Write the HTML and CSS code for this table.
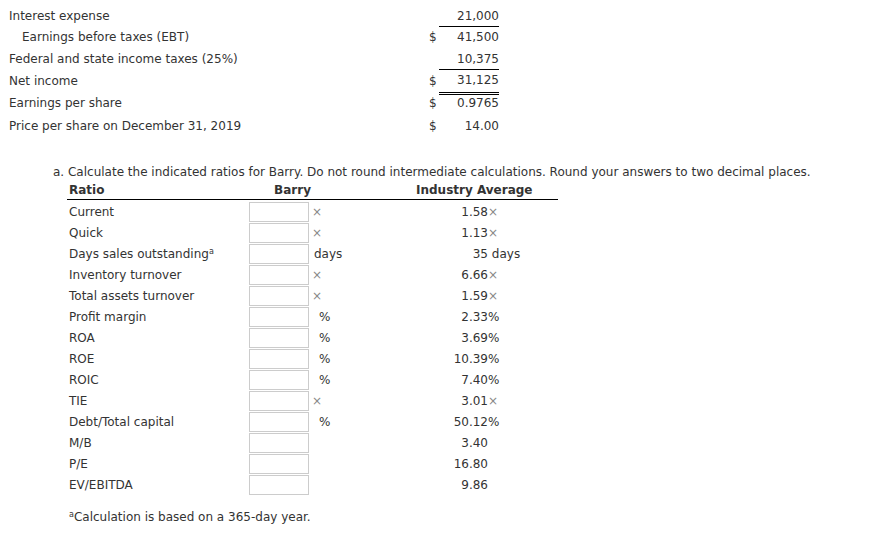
FILE: index.html
```html
<!DOCTYPE html>
<html>
<head>
<meta charset="utf-8">
<link rel="stylesheet" href="styles.css">
</head>
<body>
<div class="page">
  <div class="income">
    <div class="irow r1"><span class="lbl">Interest expense</span><span class="cur"></span><span class="num under">21,000</span></div>
    <div class="irow r2"><span class="lbl indent">Earnings before taxes (EBT)</span><span class="cur">$</span><span class="num">41,500</span></div>
    <div class="irow r3"><span class="lbl">Federal and state income taxes (25%)</span><span class="cur"></span><span class="num under">10,375</span></div>
    <div class="irow r4"><span class="lbl">Net income</span><span class="cur">$</span><span class="num dbl">31,125</span></div>
    <div class="irow r5"><span class="lbl">Earnings per share</span><span class="cur">$</span><span class="num">0.9765</span></div>
    <div class="irow r6"><span class="lbl">Price per share on December 31, 2019</span><span class="cur">$</span><span class="num">14.00</span></div>
  </div>

  <p class="instr">a. Calculate the indicated ratios for Barry. Do not round intermediate calculations. Round your answers to two decimal places.</p>

  <div class="ratios">
    <div class="hrow">
      <span class="h-ratio">Ratio</span>
      <span class="h-barry">Barry</span>
      <span class="h-ind">Industry Average</span>
    </div>
    <div class="rrow first"><span class="rl">Current</span><span class="box"></span><span class="unit x">×</span><span class="ind"><span class="iv">1.58</span><span class="iu x">×</span></span></div>
    <div class="rrow"><span class="rl">Quick</span><span class="box"></span><span class="unit x">×</span><span class="ind"><span class="iv">1.13</span><span class="iu x">×</span></span></div>
    <div class="rrow"><span class="rl">Days sales outstanding<sup>a</sup></span><span class="box"></span><span class="unit">days</span><span class="ind"><span class="iv">35</span><span class="iu">&nbsp;days</span></span></div>
    <div class="rrow"><span class="rl">Inventory turnover</span><span class="box"></span><span class="unit x">×</span><span class="ind"><span class="iv">6.66</span><span class="iu x">×</span></span></div>
    <div class="rrow"><span class="rl">Total assets turnover</span><span class="box"></span><span class="unit x">×</span><span class="ind"><span class="iv">1.59</span><span class="iu x">×</span></span></div>
    <div class="rrow"><span class="rl">Profit margin</span><span class="box"></span><span class="unit pct">%</span><span class="ind"><span class="iv">2.33</span><span class="iu">%</span></span></div>
    <div class="rrow"><span class="rl">ROA</span><span class="box"></span><span class="unit pct">%</span><span class="ind"><span class="iv">3.69</span><span class="iu">%</span></span></div>
    <div class="rrow"><span class="rl">ROE</span><span class="box"></span><span class="unit pct">%</span><span class="ind"><span class="iv">10.39</span><span class="iu">%</span></span></div>
    <div class="rrow"><span class="rl">ROIC</span><span class="box"></span><span class="unit pct">%</span><span class="ind"><span class="iv">7.40</span><span class="iu">%</span></span></div>
    <div class="rrow"><span class="rl">TIE</span><span class="box"></span><span class="unit x">×</span><span class="ind"><span class="iv">3.01</span><span class="iu x">×</span></span></div>
    <div class="rrow"><span class="rl">Debt/Total capital</span><span class="box"></span><span class="unit pct">%</span><span class="ind"><span class="iv">50.12</span><span class="iu">%</span></span></div>
    <div class="rrow"><span class="rl">M/B</span><span class="box"></span><span class="unit"></span><span class="ind"><span class="iv">3.40</span><span class="iu"></span></span></div>
    <div class="rrow"><span class="rl">P/E</span><span class="box"></span><span class="unit"></span><span class="ind"><span class="iv">16.80</span><span class="iu"></span></span></div>
    <div class="rrow"><span class="rl">EV/EBITDA</span><span class="box"></span><span class="unit"></span><span class="ind"><span class="iv">9.86</span><span class="iu"></span></span></div>
  </div>

  <p class="foot"><sup>a</sup>Calculation is based on a 365-day year.</p>
</div>
</body>
</html>
```

FILE: styles.css
```css
* { box-sizing: border-box; }
body {
  margin: 0;
  background: #fff;
  color: #333;
  font-family: "DejaVu Sans", Verdana, sans-serif;
  font-size: 12px;
}
.page { padding: 5px 0 0 9px; }

.income { display: flex; flex-direction: column; width: 490px; }
.irow {
  display: grid;
  grid-template-columns: 420px 10px 60px;
  align-items: stretch;
}
.irow > span { display: flex; align-items: center; }
.r1 { height: 22px; }
.r2 { height: 21px; }
.r2 > span { padding-bottom: 2px; }
.r3 { height: 22px; }
.r4 { height: 25px; }
.r4 > span { padding-bottom: 3px; }
.r5 { height: 23px; }
.r5 > span { padding-bottom: 8px; }
.r6 { height: 15px; }
.indent { padding-left: 13px; }
.num { justify-content: flex-end; }
.under { border-bottom: 1px solid #000; }
.dbl { border-bottom: 3px double #000; }
.cur { justify-content: flex-start; }

.instr { margin: 32px 0 0 44px; line-height: 15px; }

.ratios { margin-left: 58px; width: 491px; }
.hrow {
  display: grid;
  grid-template-columns: 182px 87px 222px;
  height: 20px;
  align-items: center;
  border-bottom: 1px solid #000;
  font-weight: bold;
}
.h-ratio { padding-left: 2px; }
.h-barry { text-align: center; }
.h-ind { padding-left: 80px; }

.rrow {
  display: grid;
  grid-template-columns: 182px 60px 27px 222px;
  height: 21px;
  align-items: center;
}
.rrow.first { margin-top: 1px; }
.rl { padding-left: 2px; }
.rl sup, .foot sup { font-size: 8px; vertical-align: 4px; line-height: 0; }
.box {
  height: 20px;
  border: 1px solid #ccc;
  background: #fff;
  align-self: end;
}
.unit { padding-left: 5px; }
.unit.x { padding-left: 3px; }
.unit.pct { padding-left: 10px; }
.x { color: #888; }
.ind { display: flex; }
.iv { width: 152px; text-align: right; }

.foot { margin: 15px 0 0 60px; line-height: 15px; }
```
